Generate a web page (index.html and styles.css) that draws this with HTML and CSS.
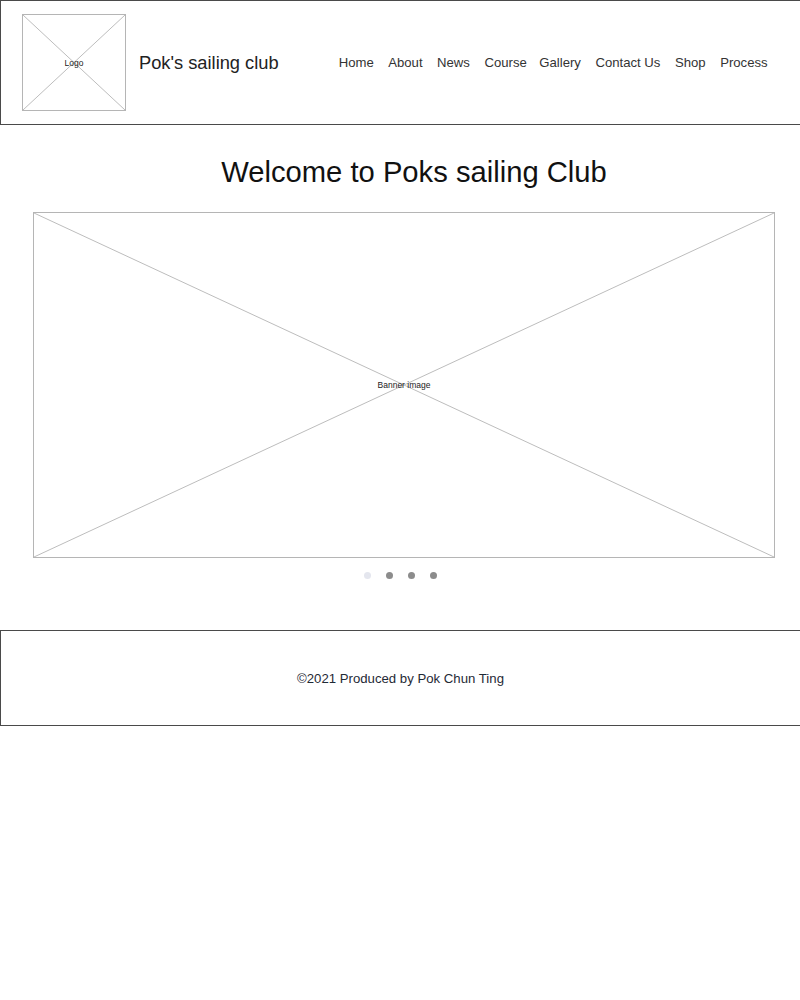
FILE: index.html
```html
<!DOCTYPE html>
<html lang="en">
<head>
<meta charset="utf-8">
<title>Pok's sailing club</title>
<link rel="stylesheet" href="styles.css">
</head>
<body>
<header class="site-header">
  <div class="placeholder logo">
    <svg class="cross" viewBox="0 0 100 100" preserveAspectRatio="none"><line x1="0" y1="0" x2="100" y2="100"/><line x1="100" y1="0" x2="0" y2="100"/></svg>
    <span class="ph-label logo-label">Logo</span>
  </div>
  <div class="site-title">Pok's sailing club</div>
  <nav class="nav">
    <a href="#">Home</a>
    <a href="#">About</a>
    <a href="#">News</a>
    <a href="#" class="tight">Course</a>
    <a href="#">Gallery</a>
    <a href="#">Contact Us</a>
    <a href="#">Shop</a>
    <a href="#">Process</a>
  </nav>
</header>
<main class="main">
  <h1 class="welcome">Welcome to Poks sailing Club</h1>
  <div class="placeholder banner">
    <svg class="cross" viewBox="0 0 100 100" preserveAspectRatio="none"><line x1="0" y1="0" x2="100" y2="100"/><line x1="100" y1="0" x2="0" y2="100"/></svg>
    <span class="ph-label banner-label">Banner image</span>
  </div>
  <div class="dots">
    <span class="dot active"></span>
    <span class="dot"></span>
    <span class="dot"></span>
    <span class="dot"></span>
  </div>
</main>
<footer class="site-footer">
  <p>©2021 Produced by Pok Chun Ting</p>
</footer>
</body>
</html>
```
FILE: styles.css
```css
* { box-sizing: border-box; }
html, body { margin: 0; padding: 0; background: #fff; }
body {
  font-family: "Liberation Sans", Arial, sans-serif;
  color: #222;
  width: 800px;
}
.site-header {
  height: 125px;
  border: 1px solid #4a4a4a;
  border-right: 0;
  display: flex;
  align-items: center;
  padding-left: 21px;
}
.placeholder {
  position: relative;
  border: 1px solid #b5b5b5;
  display: flex;
  align-items: center;
  justify-content: center;
}
.cross {
  position: absolute;
  inset: 0;
  width: 100%;
  height: 100%;
}
.cross line {
  stroke: #bdbdbd;
  stroke-width: 1;
  vector-effect: non-scaling-stroke;
}
.ph-label { position: relative; color: #222; }
.logo { width: 104px; height: 97px; }
.logo-label { font-size: 8.5px; }
.site-title {
  margin-left: 13px;
  font-size: 18.3px;
  color: #222;
  margin-top: 1px;
}
.nav {
  margin-left: 60px;
  display: flex;
  gap: 14.5px;
  margin-top: -1px;
}
.nav a {
  font-size: 13.15px;
  color: #333;
  text-decoration: none;
}
.nav a.tight { margin-right: -2px; }
.main { padding-top: 27px; }
.welcome {
  margin: 0;
  padding-left: 28px;
  text-align: center;
  font-weight: normal;
  font-size: 29.2px;
  line-height: 40px;
  color: #111;
}
.banner {
  margin: 20px 0 0 33px;
  width: 742px;
  height: 346px;
}
.banner-label { font-size: 8.5px; }
.dots {
  display: flex;
  gap: 15px;
  margin: 14px 0 0 363.5px;
  height: 7px;
}
.dot {
  width: 7px;
  height: 7px;
  border-radius: 50%;
  background: #8c8c8c;
}
.dot.active { background: #e4e6ee; }
.site-footer {
  margin-top: 51px;
  height: 96px;
  border: 1px solid #4a4a4a;
  border-right: 0;
  display: flex;
  align-items: center;
  justify-content: center;
}
.site-footer p {
  margin: 0;
  font-size: 13.2px;
  color: #1f2a36;
}
```
